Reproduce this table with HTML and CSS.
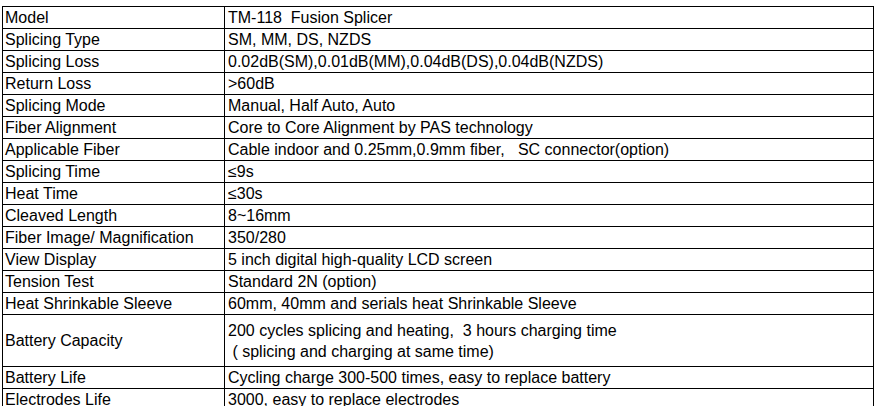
FILE: index.html
```html
<!DOCTYPE html>
<html>
<head>
<meta charset="utf-8">
<link rel="stylesheet" href="styles.css">
</head>
<body>
<table class="spec">
<colgroup><col class="c1"><col class="c2"></colgroup>
<tr><td>Model</td><td>TM-118  Fusion Splicer</td></tr>
<tr><td>Splicing Type</td><td>SM, MM, DS, NZDS</td></tr>
<tr><td>Splicing Loss</td><td>0.02dB(SM),0.01dB(MM),0.04dB(DS),0.04dB(NZDS)</td></tr>
<tr><td>Return Loss</td><td>&gt;60dB</td></tr>
<tr><td>Splicing Mode</td><td>Manual, Half Auto, Auto</td></tr>
<tr><td>Fiber Alignment</td><td>Core to Core Alignment by PAS technology</td></tr>
<tr><td>Applicable Fiber</td><td>Cable indoor and 0.25mm,0.9mm fiber,   SC connector(option)</td></tr>
<tr><td>Splicing Time</td><td>≤9s</td></tr>
<tr><td>Heat Time</td><td>≤30s</td></tr>
<tr><td>Cleaved Length</td><td>8~16mm</td></tr>
<tr><td>Fiber Image/ Magnification</td><td>350/280</td></tr>
<tr><td>View Display</td><td>5 inch digital high-quality LCD screen</td></tr>
<tr><td>Tension Test</td><td>Standard 2N (option)</td></tr>
<tr><td>Heat Shrinkable Sleeve</td><td>60mm, 40mm and serials heat Shrinkable Sleeve</td></tr>
<tr class="tall"><td>Battery Capacity</td><td>200 cycles splicing and heating,  3 hours charging time<br> ( splicing and charging at same time)</td></tr>
<tr><td>Battery Life</td><td>Cycling charge 300-500 times, easy to replace battery</td></tr>
<tr><td>Electrodes Life</td><td>3000, easy to replace electrodes</td></tr>
</table>
</body>
</html>
```
FILE: styles.css
```css
html, body {
  margin: 0;
  padding: 0;
  background: #fff;
}
.spec {
  margin: 6px 0 0 2px;
  border-collapse: collapse;
  table-layout: fixed;
  width: 872px;
  font-family: "Liberation Sans", Arial, sans-serif;
  font-size: 16px;
  color: #000;
}
.c1 { width: 222px; }
.spec td {
  border: 1px solid #000;
  height: 22px;
  padding: 0 0 0 2px;
  line-height: 20px;
  vertical-align: middle;
  white-space: pre;
  box-sizing: border-box;
}
.spec td + td {
  padding-left: 3px;
}
.spec tr.tall td {
  height: 52px;
  line-height: 21px;
}
```
